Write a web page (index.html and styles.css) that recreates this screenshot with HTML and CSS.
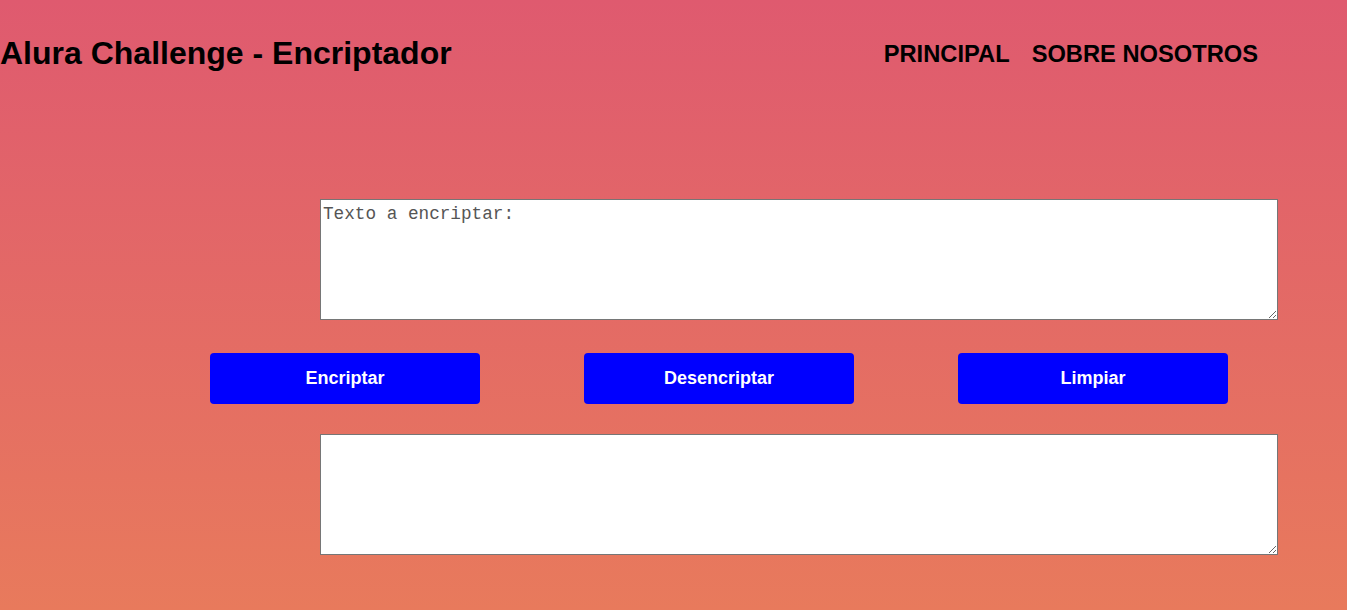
FILE: index.html
```html
<!DOCTYPE html>
<html lang="es">
<head>
<meta charset="utf-8">
<title>Alura Challenge - Encriptador</title>
<link rel="stylesheet" href="styles.css">
</head>
<body>
<header class="header">
  <h1 class="title">Alura Challenge - Encriptador</h1>
  <nav class="nav">
    <a class="nav-link" href="#">PRINCIPAL</a>
    <a class="nav-link" href="#">SOBRE NOSOTROS</a>
  </nav>
</header>
<main class="main">
  <div class="field-row">
    <textarea class="field" placeholder="Texto a encriptar:"></textarea>
  </div>
  <div class="buttons">
    <button class="btn">Encriptar</button>
    <button class="btn">Desencriptar</button>
    <button class="btn">Limpiar</button>
  </div>
  <div class="field-row">
    <textarea class="field" readonly></textarea>
  </div>
</main>
</body>
</html>
```
FILE: styles.css
```css
html, body {
  margin: 0;
  height: 100%;
}
body {
  background: linear-gradient(to bottom, #df5a6f 0%, #e87a5c 100%);
  font-family: "Liberation Sans", Arial, sans-serif;
  color: #000;
}
.header {
  display: flex;
  justify-content: space-between;
  align-items: center;
  height: 106px;
  padding-right: 89px;
}
.title {
  margin: 0;
  font-size: 32px;
  font-weight: bold;
}
.nav {
  display: flex;
  gap: 22px;
  padding-top: 2px;
}
.nav-link {
  color: #000;
  text-decoration: none;
  font-weight: bold;
  font-size: 23.7px;
}
.main {
  padding-top: 93px;
}
.field-row {
  padding-left: 320px;
}
.field {
  display: block;
  box-sizing: border-box;
  width: 958px;
  height: 121px;
  margin: 0;
  padding: 4px 2px 2px;
  border: 1px solid #767676;
  background: #fff;
  font-family: "Liberation Mono", "DejaVu Sans Mono", monospace;
  font-size: 17.7px;
  resize: vertical;
}
.field::placeholder {
  color: #555;
}
.buttons {
  display: flex;
  justify-content: space-around;
  padding: 33px 67px 30px 158px;
}
.btn {
  width: 270px;
  height: 51px;
  border: none;
  border-radius: 4px;
  background: #0000ff;
  color: #fff;
  font-family: "Liberation Sans", Arial, sans-serif;
  font-weight: bold;
  font-size: 18px;
  cursor: pointer;
}
```
